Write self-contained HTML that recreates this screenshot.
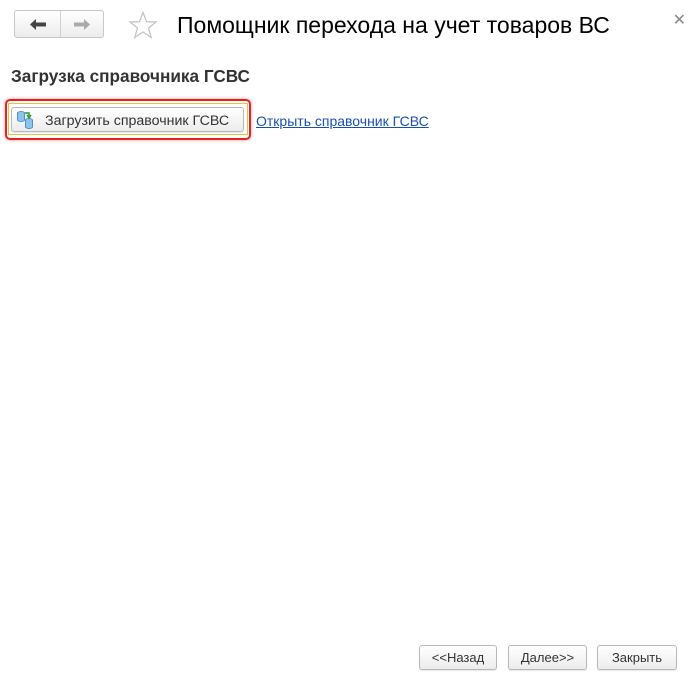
<!DOCTYPE html>
<html><head><meta charset="utf-8"><style>
body{margin:0;width:696px;height:686px;background:#fff;font-family:"Liberation Sans",Arial,sans-serif;position:relative;overflow:hidden}
.abs{position:absolute}
.nav{left:14px;top:10px;width:90px;height:28px;border:1px solid #c8c8c8;border-radius:3px;background:linear-gradient(#fff,#ececec);box-sizing:border-box}
.nav .sep{position:absolute;left:45px;top:0;width:1px;height:26px;background:#d0d0d0}
.title{left:177px;top:10px;font-size:23px;color:#000;line-height:30px}
.close{right:10px;top:10px;font-size:16px;color:#888}
.h{left:11px;top:66px;font-size:17.2px;font-weight:bold;color:#333}
.btn{border:1px solid #b8b8b8;border-radius:3px;background:linear-gradient(#fff,#ececec);box-sizing:border-box;font-size:13px;color:#333;text-align:center;box-shadow:0 1px 1px rgba(0,0,0,.1)}
a{color:#1a4fb0;text-decoration:underline;font-size:14px}
</style></head><body>
<div class="abs nav"><div class="sep"></div>
<svg class="abs" style="left:14px;top:7px" width="18" height="13"><path d="M1 6.5L7 1V4.5H17V8.5H7V12Z" fill="#444"/></svg>
<svg class="abs" style="left:58px;top:7px" width="18" height="13"><path d="M17 6.5L11 1V4.5H1V8.5H11V12Z" fill="#aaa"/></svg>
</div>
<svg class="abs" style="left:128px;top:11px" width="30" height="29"><path d="M15 1.5L18.6 10.7L28 11L20.5 17L23.2 26.5L15 21L6.8 26.5L9.5 17L2 11L11.4 10.7Z" fill="none" stroke="#c4c4c4" stroke-width="1.3"/></svg>
<div class="abs title">Помощник перехода на учет товаров ВС</div>
<div class="abs close">✕</div>
<div class="abs h">Загрузка справочника ГСВС</div>
<div class="abs" style="left:5px;top:99px;width:246px;height:41px;border:2px solid #e82020;border-radius:5px;box-sizing:border-box;box-shadow:0 0 3px rgba(230,0,0,.4)"></div>
<div class="abs" style="left:8px;top:103px;width:240px;height:32px;border:1px solid #e8c040;box-sizing:border-box"></div>
<div class="abs btn" style="left:11px;top:107px;width:233px;height:25px;line-height:27px;text-align:left;padding-left:33px;font-size:14.2px">Загрузить справочник ГСВС</div>
<svg class="abs" style="left:16px;top:110px" width="20" height="20"><ellipse cx="5" cy="3" rx="3.5" ry="1.5" fill="#8cc4ee" stroke="#3a7ec0" stroke-width=".8"/><path d="M1.5 3V10A3.5 1.5 0 0 0 8.5 10V3" fill="#8cc4ee" stroke="#3a7ec0" stroke-width=".8"/><ellipse cx="13" cy="10" rx="3.5" ry="1.5" fill="#8cc4ee" stroke="#3a7ec0" stroke-width=".8"/><path d="M9.5 10V17A3.5 1.5 0 0 0 16.5 17V10" fill="#8cc4ee" stroke="#3a7ec0" stroke-width=".8"/><path d="M9 3H13V6M11 5L13 8L15 5" fill="none" stroke="#2a9a2a" stroke-width="1.5"/></svg>
<a class="abs" style="left:256px;top:113px">Открыть справочник ГСВС</a>
<div class="abs btn" style="left:419px;top:645px;width:78px;height:25px;line-height:23px">&lt;&lt;Назад</div>
<div class="abs btn" style="left:508px;top:645px;width:79px;height:25px;line-height:23px">Далее&gt;&gt;</div>
<div class="abs btn" style="left:597px;top:645px;width:80px;height:25px;line-height:23px">Закрыть</div>
</body></html>
